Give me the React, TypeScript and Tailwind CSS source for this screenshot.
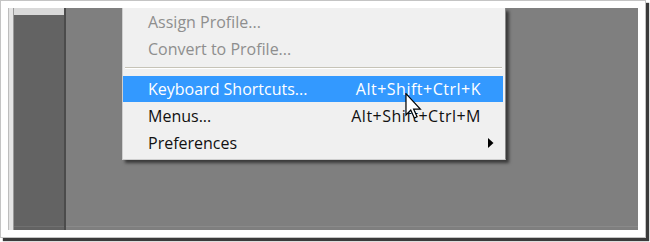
export default function App() {
  return (
    <div
      className="h-[242px] w-[650px] overflow-hidden bg-white"
      style={{ fontFamily: "'Open Sans', 'Noto Sans', sans-serif" }}
    >
      <div className="h-[238px] w-[646px] border border-[#c4c4c4] bg-white p-[7px] shadow-[3px_3px_1px_#3a3a3a]">
        <div className="relative flex h-[222px] w-[630px] overflow-hidden">
          {/* left dock */}
          <div className="flex h-full">
            <div className="w-px bg-[#bdbdbd]" />
            <div className="w-[4px] bg-[#e4e4e4]" />
            <div className="w-px bg-[#9a9a9a]" />
            <div className="flex w-[50px] flex-col justify-between bg-[#636363]">
              <div className="h-[7px] bg-[#d9d9d9]" />
              <div className="h-[4px] border-t border-[#707070]" />
            </div>
            <div className="w-[2px] bg-[#4b4b4b]" />
          </div>

          {/* canvas */}
          <div className="flex flex-1 flex-col justify-end bg-[#7f7f7f]">
            <div className="h-[4px] border-t border-[#8a8a8a]" />
          </div>

          {/* context menu */}
          <div className="absolute left-[114px] top-0 flex h-[152px] w-[384px] flex-col border-x border-b border-[#cfcfcf] border-r-[#8a8a8a] bg-[#f0f0f0] pb-[3px] text-[16px] shadow-[3px_3px_3px_rgba(0,0,0,0.55)]">
            <MenuItem label="Assign Profile..." disabled h="h-[27px]" />
            <MenuItem label="Convert to Profile..." disabled h="h-[27px]" />
            <div className="flex h-[14px] flex-col pl-[2px] pr-[3px] pt-[5px]">
              <div className="h-px bg-[#c6c3b7]" />
              <div className="h-px bg-white" />
            </div>
            <MenuItem label="Keyboard Shortcuts..." shortcut="Alt+Shift+Ctrl+K" active h="h-[26px]" />
            <MenuItem label="Menus..." shortcut="Alt+Shift+Ctrl+M" h="h-[27px]" />
            <MenuItem label="Preferences" submenu h="h-[27px]" />
          </div>

          {/* mouse pointer */}
          <svg
            className="absolute left-[397px] top-[85px]"
            width="17"
            height="26"
            viewBox="0 0 12 19"
          >
            <path
              d="M0.5 0.5 L0.5 16 L4 12.5 L6.6 18.3 L8.6 17.4 L6.1 11.8 L11 11.8 Z"
              fill="white"
              stroke="black"
              strokeWidth="0.9"
              strokeLinejoin="miter"
            />
          </svg>
        </div>
      </div>
    </div>
  );
}

function MenuItem({
  label,
  shortcut,
  disabled,
  active,
  submenu,
  h,
}: {
  label: string;
  shortcut?: string;
  disabled?: boolean;
  active?: boolean;
  submenu?: boolean;
  h: string;
}) {
  const color = disabled ? "text-[#8e8e8e]" : active ? "text-white" : "text-[#111]";
  return (
    <div
      className={`${h} mr-[2px] flex items-center pl-[25px] ${color} ${
        active ? "bg-[#3399ff]" : ""
      }`}
    >
      <span className="flex-1 whitespace-nowrap">{label}</span>
      {shortcut && (
        <span className="whitespace-nowrap tracking-[0.5px]">{shortcut}</span>
      )}
      <span className="flex w-[22px] items-center pl-[7px]">
        {submenu && (
          <svg width="6" height="10" viewBox="0 0 6 10">
            <path d="M0 0 L5.5 5 L0 10 Z" fill="black" />
          </svg>
        )}
      </span>
    </div>
  );
}
